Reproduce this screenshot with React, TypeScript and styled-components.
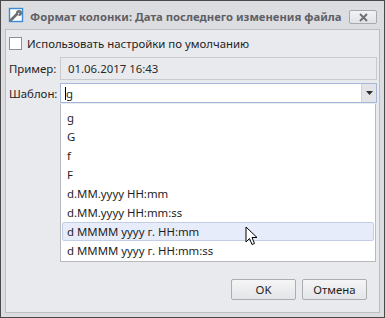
import React from 'react';
import styled, { createGlobalStyle } from 'styled-components';

const GlobalStyle = createGlobalStyle`
  html, body {
    margin: 0;
    padding: 0;
    background: #ffffff;
  }
  body {
    font-family: "Noto Sans", "Liberation Sans", sans-serif;
    font-size: 11.4px;
    color: #1e1e1e;
  }
`;

const Window = styled.div`
  width: 385px;
  height: 318px;
  box-sizing: border-box;
  border: 1px solid #4a4a4a;
  background: #dcdde1;
  padding: 0 4px 4px 4px;
  display: flex;
  flex-direction: column;
`;

const TitleBar = styled.div`
  height: 28px;
  display: flex;
  align-items: center;
  padding: 0 3px 0 3px;
  gap: 6px;
`;

const Title = styled.div`
  flex: 1;
  font-weight: bold;
  font-size: 11.3px;
  color: #5f6066;
  white-space: nowrap;
  padding-top: 2px;
`;

const CloseButton = styled.div`
  flex-shrink: 0;
  width: 26px;
  height: 12px;
  margin-top: 4px;
  border: 1px solid #a9aaae;
  border-radius: 2px;
  background: linear-gradient(#f2f3f5, #e1e2e6);
  display: flex;
  align-items: center;
  justify-content: center;
`;

const Client = styled.div`
  flex: 1;
  border: 1px solid #bdbec2;
  background: #e9eaed;
  display: flex;
  flex-direction: column;
  padding: 4px 2px 12px 3px;
  position: relative;
`;

const CheckRow = styled.label`
  display: flex;
  align-items: center;
  gap: 5px;
  height: 18px;
`;

const CheckBox = styled.span`
  width: 11px;
  height: 11px;
  border: 1px solid #8f9094;
  background: #ffffff;
  display: inline-block;
`;

const FormRow = styled.div<{ $top: number }>`
  display: grid;
  grid-template-columns: 51px 1fr;
  align-items: center;
  margin-top: ${(p) => p.$top}px;
  position: relative;
`;

const Label = styled.span`
  white-space: nowrap;
`;

const ReadOnlyField = styled.div`
  height: 23px;
  box-sizing: border-box;
  border: 1px solid #c9cacd;
  background: #e9eaed;
  padding: 0 7px;
  display: flex;
  align-items: center;
  color: #2a2a2a;
`;

const Combo = styled.div`
  height: 20px;
  box-sizing: border-box;
  border: 1px solid #a6b7d8;
  background: #ffffff;
  display: flex;
  align-items: stretch;
  position: relative;
`;

const ComboText = styled.div`
  flex: 1;
  display: flex;
  align-items: center;
  padding-left: 4px;
`;

const Caret = styled.span`
  width: 1px;
  height: 13px;
  background: #000;
`;

const ComboButton = styled.div`
  width: 14px;
  border-left: 1px solid #d0d3da;
  background: #e3e4e8;
  display: flex;
  align-items: center;
  justify-content: center;
`;

const DropList = styled.div`
  position: absolute;
  left: 51px;
  right: 1px;
  top: 21px;
  box-sizing: border-box;
  border: 1px solid #b9babd;
  border-top: none;
  background: #ffffff;
  padding: 4px 1px 1px 1px;
  z-index: 2;
`;

const Item = styled.div<{ $hot?: boolean }>`
  height: 19px;
  box-sizing: border-box;
  display: flex;
  align-items: center;
  padding-left: 4px;
  border: 1px solid ${(p) => (p.$hot ? '#c3cde4' : 'transparent')};
  border-radius: 2px;
  background: ${(p) => (p.$hot ? '#e6ecfa' : 'transparent')};
  color: #1e1e1e;
  position: relative;
`;

const Pointer = styled.svg`
  position: absolute;
  left: 182px;
  top: 3px;
`;

const Footer = styled.div`
  margin-top: auto;
  display: flex;
  justify-content: flex-end;
  gap: 6px;
  padding-right: 10px;
`;

const Button = styled.div`
  width: 65px;
  height: 21px;
  box-sizing: border-box;
  border: 1px solid #acadb1;
  border-radius: 2px;
  background: linear-gradient(#f5f5f6, #e4e5e8);
  display: flex;
  align-items: center;
  justify-content: center;
  color: #1e1e1e;
`;

const formats = [
  'g',
  'G',
  'f',
  'F',
  'd.MM.yyyy HH:mm',
  'd.MM.yyyy HH:mm:ss',
  'd MMMM yyyy г. HH:mm',
  'd MMMM yyyy г. HH:mm:ss',
];

const AppIcon = () => (
  <svg width="16" height="16" viewBox="0 0 16 16">
    <rect x="1.5" y="1.5" width="13" height="13" fill="#ffffff" stroke="#3b8ad9" strokeWidth="1.4" />
    <path d="M3 13 L9 7" stroke="#6d6f75" strokeWidth="2.6" strokeLinecap="round" />
    <path d="M8 6 a3 3 0 1 1 3 3 l-1 -1 l1.5 -1.5 l-1 -1 l-1.5 1.5 z" fill="#6d6f75" />
  </svg>
);

export default function App() {
  return (
    <>
      <GlobalStyle />
      <Window>
        <TitleBar>
          <AppIcon />
          <Title>Формат колонки: Дата последнего изменения файла</Title>
          <CloseButton>
            <svg width="11" height="9" viewBox="0 0 11 9">
              <path d="M2 1 L9 8 M9 1 L2 8" stroke="#6f7075" strokeWidth="2" />
            </svg>
          </CloseButton>
        </TitleBar>
        <Client>
          <CheckRow>
            <CheckBox />
            <span>Использовать настройки по умолчанию</span>
          </CheckRow>
          <FormRow $top={5}>
            <Label>Пример:</Label>
            <ReadOnlyField>01.06.2017 16:43</ReadOnlyField>
          </FormRow>
          <FormRow $top={3}>
            <Label>Шаблон:</Label>
            <Combo>
              <ComboText>
                <Caret />
                <span>g</span>
              </ComboText>
              <ComboButton>
                <svg width="7" height="4" viewBox="0 0 7 4">
                  <path d="M0 0 H7 L3.5 4 Z" fill="#2e2e2e" />
                </svg>
              </ComboButton>
            </Combo>
            <DropList>
              {formats.map((f, i) => (
                <Item key={f} $hot={i === 6}>
                  {f}
                  {i === 6 && (
                    <Pointer width="13" height="20" viewBox="0 0 13 20">
                      <path
                        d="M1 1 L1 16 L4.5 12.5 L7 18.5 L9.5 17.5 L7 11.5 L12 11.5 Z"
                        fill="#ffffff"
                        stroke="#000000"
                        strokeWidth="1"
                      />
                    </Pointer>
                  )}
                </Item>
              ))}
            </DropList>
          </FormRow>
          <Footer>
            <Button>OK</Button>
            <Button>Отмена</Button>
          </Footer>
        </Client>
      </Window>
    </>
  );
}
